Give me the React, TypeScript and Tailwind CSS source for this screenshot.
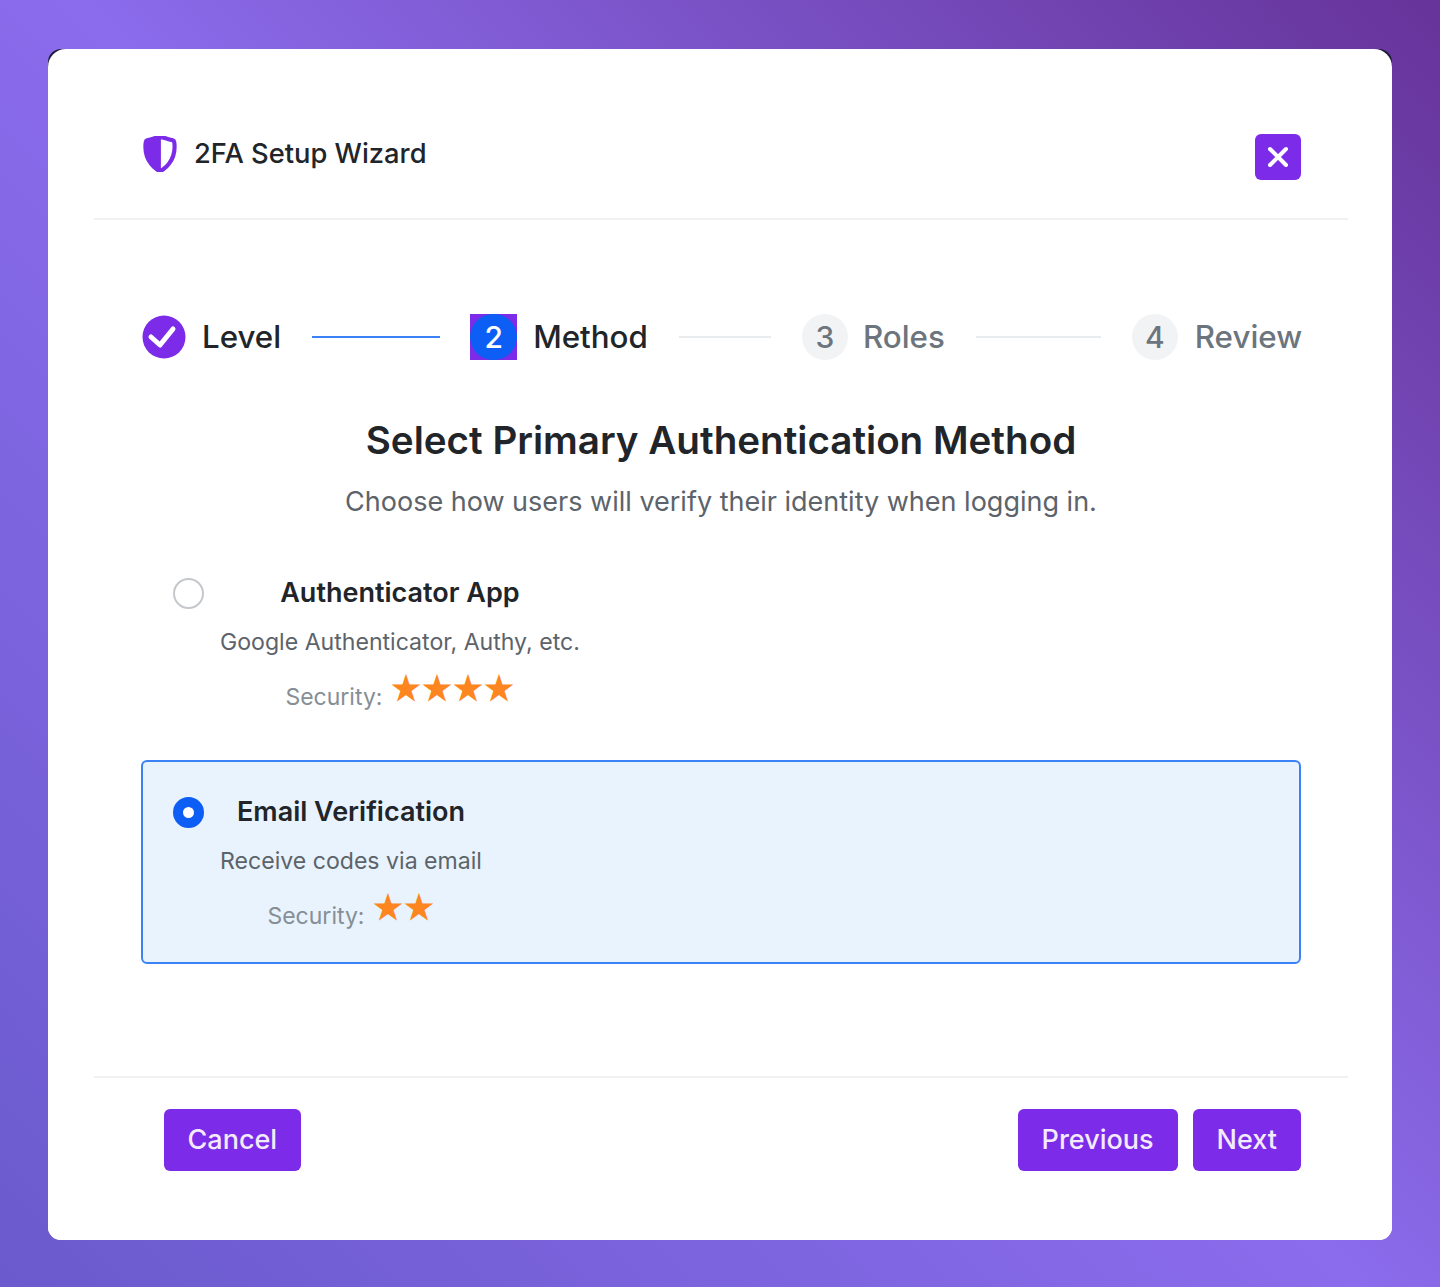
import { X } from "lucide-react";
import { BsShieldShaded } from "react-icons/bs";

const methods = [
  {
    title: "Authenticator App",
    desc: "Google Authenticator, Authy, etc.",
    stars: "★★★★",
    selected: false,
  },
  {
    title: "Email Verification",
    desc: "Receive codes via email",
    stars: "★★",
    selected: true,
  },
];

function MethodOption({ title, desc, stars, selected }: (typeof methods)[number]) {
  return (
    <div
      className={`flex items-start gap-4 rounded-md border-2 px-[30px] pt-[35px] h-[204px] ${
        selected ? "border-[#3b82f6] bg-[#e8f3fd]" : "border-transparent"
      }`}
    >
      {selected ? (
        <span className="w-[31px] h-[31px] rounded-full border-[10px] border-[#0d5ef4] bg-white shrink-0" />
      ) : (
        <span className="w-[31px] h-[31px] rounded-full border-2 border-[#c4c8cc] bg-white shrink-0" />
      )}
      <div className="flex flex-col items-center">
        <div className="text-[27px] leading-[38px] font-semibold text-[#212529] -mt-1">{title}</div>
        <div className="text-[23.1px] leading-[32px] text-[#5c636a] mt-[14px]">{desc}</div>
        <div className="flex items-center gap-2 mt-[14px] h-[40px]">
          <span className="text-[23px] text-[#868e96] mt-[10px]">Security:</span>
          <span className="text-[31px] leading-none text-[#fd8620] font-['Noto_Sans_CJK_SC',sans-serif] -mt-[13px]">{stars}</span>
        </div>
      </div>
    </div>
  );
}

function Connector({ width, active }: { width: string; active?: boolean }) {
  return <div className={`${width} h-[2px] ${active ? "bg-[#3b82f6]" : "bg-[#e9ecef]"}`} />;
}

export default function App() {
  return (
    <div className="min-h-[1287px] px-12 pt-[49px] pb-[47px] bg-[linear-gradient(45deg,#6a5acd_0%,#8b6cec_50%,#663399_100%)] font-['Inter',sans-serif]">
      <div className="rounded-[13px] bg-[linear-gradient(#1e1b3a_0,#1e1b3a_40px,#fff_40px)]">
        <div className="rounded-[18px] rounded-b-[13px] bg-white pl-[46px] pr-[44px] pb-[69px] h-[1191px] flex flex-col">
          {/* Header */}
          <div className="flex items-start justify-between border-b-2 border-[#f0f1f2] px-[47px] pt-[85px] h-[171px]">
            <div className="flex items-center gap-[16px]">
              <BsShieldShaded className="ml-[1px] mt-[1px] text-[#7c2be8] stroke-[#7c2be8] stroke-[0.8]" size={36} />
              <h1 className="mt-[1px] text-[27.3px] leading-[38px] font-medium text-[#212529]">2FA Setup Wizard</h1>
            </div>
            <button className="w-[46px] h-[46px] rounded-md bg-[#7c2be8] text-white flex items-center justify-center">
              <X size={32} strokeWidth={3} />
            </button>
          </div>

          {/* Steps */}
          <div className="flex items-center px-[48px] mt-[94px] h-[46px] text-[31.3px] font-medium">
            <svg width="44" height="44" viewBox="0 0 44 44" className="shrink-0">
              <circle cx="22" cy="22" r="21.5" fill="#7c2be8" />
              <polyline points="9,22 18,30 31,14" fill="none" stroke="#fff" strokeWidth="5" strokeLinecap="round" strokeLinejoin="round" />
            </svg>
            <span className="ml-[16px] text-[#212529]">Level</span>
            <div className="ml-[31px] mr-[30px]"><Connector width="w-[128px]" active /></div>
            <span className="w-[47px] h-[46px] bg-[#7c2be8] shrink-0 flex">
              <span className="w-full h-full rounded-full bg-[#0d5ef4] text-white flex items-center justify-center text-[30px]">2</span>
            </span>
            <span className="ml-[16px] text-[#212529]">Method</span>
            <div className="ml-[31px] mr-[31px]"><Connector width="w-[92px]" /></div>
            <span className="w-[46px] h-[46px] rounded-full bg-[#f1f3f5] text-[#6c757d] flex items-center justify-center text-[30px] shrink-0">3</span>
            <span className="ml-[15px] text-[#6c757d]">Roles</span>
            <div className="ml-[31px] mr-[31px]"><Connector width="w-[125px]" /></div>
            <span className="w-[46px] h-[46px] rounded-full bg-[#f1f3f5] text-[#6c757d] flex items-center justify-center text-[30px] shrink-0">4</span>
            <span className="ml-[17px] text-[#6c757d]">Review</span>
          </div>

          {/* Title */}
          <h2 className="mt-[54px] text-center text-[38.6px] leading-[52px] font-semibold text-[#212529]">
            Select Primary Authentication Method
          </h2>
          <p className="mt-[18px] text-center text-[27px] leading-[36px] text-[#5c636a]">
            Choose how users will verify their identity when logging in.
          </p>

          {/* Options */}
          <div className="mt-[21px] mx-[47px] flex flex-col gap-[15px]">
            {methods.map((m) => (
              <MethodOption key={m.title} {...m} />
            ))}
          </div>

          {/* Footer */}
          <div className="mt-auto border-t-2 border-[#f0f1f2] pt-[31px] pl-[70px] pr-[47px] flex justify-between">
            <button className="h-[62px] px-[23.5px] rounded-md bg-[#7c2be8] text-[#f3eafd] text-[27px] font-medium">Cancel</button>
            <div className="flex gap-[15px]">
              <button className="h-[62px] px-6 rounded-md bg-[#7c2be8] text-[#f3eafd] text-[27px] font-medium">Previous</button>
              <button className="h-[62px] px-6 rounded-md bg-[#7c2be8] text-[#f3eafd] text-[27px] font-medium">Next</button>
            </div>
          </div>
        </div>
      </div>
    </div>
  );
}
